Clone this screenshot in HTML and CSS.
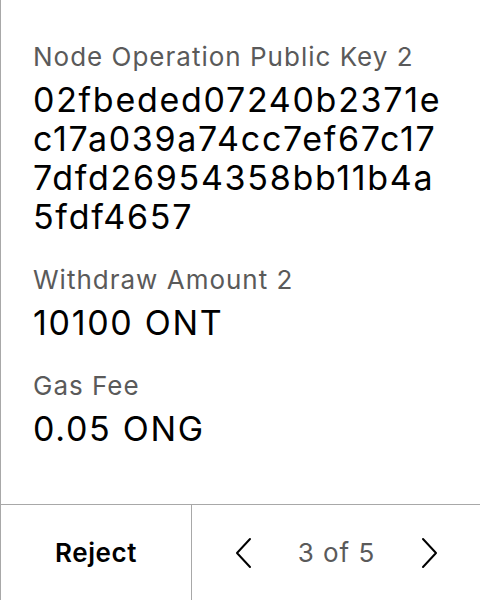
FILE: index.html
```html
<!DOCTYPE html>
<html>
<head>
<meta charset="utf-8">
<link rel="stylesheet" href="styles.css">
</head>
<body>
<div class="panel">
  <div class="content">
    <div class="field">
      <div class="label">Node Operation Public Key 2</div>
      <div class="value">02fbeded07240b2371ec17a039a74cc7ef67c177dfd26954358bb11b4a5fdf4657</div>
    </div>
    <div class="field">
      <div class="label">Withdraw Amount 2</div>
      <div class="value">10100 ONT</div>
    </div>
    <div class="field">
      <div class="label">Gas Fee</div>
      <div class="value">0.05 ONG</div>
    </div>
  </div>
  <div class="footer">
    <div class="reject">Reject</div>
    <div class="pager">
      <svg class="chev" width="18" height="32" viewBox="0 0 18 32"><path d="M16 2 L3 16 L16 30" fill="none" stroke="#000" stroke-width="2" stroke-linecap="round" stroke-linejoin="round"/></svg>
      <span class="count">3 of 5</span>
      <svg class="chev" width="18" height="32" viewBox="0 0 18 32"><path d="M2 2 L15 16 L2 30" fill="none" stroke="#000" stroke-width="2" stroke-linecap="round" stroke-linejoin="round"/></svg>
    </div>
  </div>
</div>
</body>
</html>
```
FILE: styles.css
```css
html, body {
  margin: 0;
  padding: 0;
  background: #fff;
}
body {
  font-family: Inter, "Noto Sans", sans-serif;
  color: #000;
}
.panel {
  width: 480px;
  height: 600px;
  box-sizing: border-box;
  border-left: 1px solid #a8a8a8;
  display: flex;
  flex-direction: column;
}
.content {
  flex: 1;
  padding: 41px 32px 0 32px;
  display: flex;
  flex-direction: column;
  gap: 28px;
}
.label {
  font-size: 26px;
  line-height: 31px;
  letter-spacing: 1px;
  color: #5a5a5a;
  margin-bottom: 8px;
}
.value {
  font-size: 34px;
  line-height: 39px;
  letter-spacing: 1.7px;
  word-break: break-all;
}
.footer {
  height: 96px;
  box-sizing: border-box;
  border-top: 1px solid #a8a8a8;
  display: grid;
  grid-template-columns: 191px 1fr;
}
.reject {
  display: flex;
  align-items: center;
  justify-content: center;
  font-size: 26px;
  font-weight: 600;
  letter-spacing: 0.6px;
  border-right: 1px solid #a8a8a8;
}
.pager {
  display: flex;
  align-items: center;
  justify-content: space-between;
  padding: 0 41px 0 42px;
}
.count {
  font-size: 26px;
  letter-spacing: 1px;
  color: #5a5a5a;
}
```
